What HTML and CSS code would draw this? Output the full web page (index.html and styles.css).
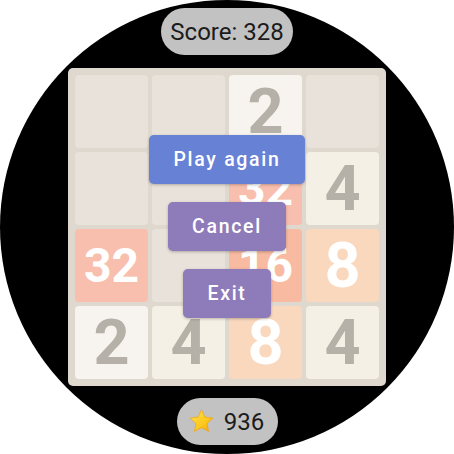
FILE: index.html
```html
<!DOCTYPE html>
<html>
<head>
<meta charset="utf-8">
<link rel="stylesheet" href="styles.css">
</head>
<body>
<div class="watch">
  <div class="pill score">Score: 328</div>
  <div class="board">
    <div class="tile"></div>
    <div class="tile"></div>
    <div class="tile t2">2</div>
    <div class="tile"></div>

    <div class="tile"></div>
    <div class="tile"></div>
    <div class="tile t32 two">32</div>
    <div class="tile t4">4</div>

    <div class="tile t32 two">32</div>
    <div class="tile"></div>
    <div class="tile t16 two">16</div>
    <div class="tile t8">8</div>

    <div class="tile t2">2</div>
    <div class="tile t4">4</div>
    <div class="tile t8">8</div>
    <div class="tile t4">4</div>

    <div class="menu">
      <button class="btn blue">Play again</button>
      <button class="btn purple">Cancel</button>
      <button class="btn purple">Exit</button>
    </div>
  </div>
  <div class="pill best">
    <svg class="star" viewBox="0 0 24 24" width="27" height="27">
      <defs>
        <linearGradient id="sg" x1="0" y1="0" x2="1" y2="1">
          <stop offset="0" stop-color="#ffe259"/>
          <stop offset="0.6" stop-color="#fdc91c"/>
          <stop offset="1" stop-color="#f2a20c"/>
        </linearGradient>
      </defs>
      <path d="M12 1.6l3.05 6.5 7.05.85-5.2 4.85 1.35 7.0L12 17.3l-6.25 3.5 1.35-7.0L1.9 8.95l7.05-.85z" fill="url(#sg)" stroke="#f0a00a" stroke-width="0.6" stroke-linejoin="round"/>
    </svg>
    <span>936</span>
  </div>
</div>
</body>
</html>
```

FILE: styles.css
```css
html, body {
  margin: 0;
  padding: 0;
  background: #ffffff;
}
.watch {
  width: 454px;
  height: 454px;
  border-radius: 50%;
  background: #000000;
  overflow: hidden;
  display: flex;
  flex-direction: column;
  align-items: center;
  font-family: Roboto, "Liberation Sans", sans-serif;
}
.pill {
  background: #c2c2c2;
  color: #1b1b1b;
  border-radius: 24px;
  font-size: 24px;
  display: flex;
  align-items: center;
  justify-content: center;
}
.score {
  margin-top: 8px;
  width: 132px;
  height: 47px;
}
.best {
  margin-top: 12px;
  width: 101px;
  height: 47px;
  gap: 9px;
  padding-right: 2px;
  box-sizing: border-box;
}
.star {
  display: block;
}
.board {
  position: relative;
  margin-top: 13px;
  width: 318px;
  height: 318px;
  box-sizing: border-box;
  padding: 7px;
  background: #dfd8cf;
  border-radius: 5px;
  display: grid;
  grid-template-columns: repeat(4, 73px);
  grid-template-rows: repeat(4, 73px);
  gap: 4px;
}
.tile {
  background: #e8e2da;
  border-radius: 4px;
  display: flex;
  align-items: center;
  justify-content: center;
  font-weight: 700;
  font-size: 63px;
  color: #ffffff;
  line-height: 1;
}
.tile.two {
  font-size: 48px;
}
.t2 {
  background: #f7f3ee;
  color: #b5b0a8;
}
.t4 {
  background: #f5f0e5;
  color: #b5b0a8;
}
.t8 {
  background: #f9d8be;
}
.t16 {
  background: #f8baa1;
}
.t32 {
  background: #f9bfae;
}
.menu {
  position: absolute;
  left: 0;
  top: 0;
  right: 0;
  bottom: 0;
  display: flex;
  flex-direction: column;
  align-items: center;
  padding-top: 67px;
  gap: 18px;
  box-sizing: border-box;
}
.btn {
  border: none;
  height: 49px;
  padding: 0 24px;
  border-radius: 5px;
  color: #ffffff;
  font-family: Roboto, "Liberation Sans", sans-serif;
  font-weight: 500;
  font-size: 19.5px;
  letter-spacing: 1.7px;
  box-shadow: 0 1px 3px rgba(0, 0, 0, 0.25);
}
.blue {
  background: #6781d5;
}
.purple {
  background: #8e7bba;
}
```
